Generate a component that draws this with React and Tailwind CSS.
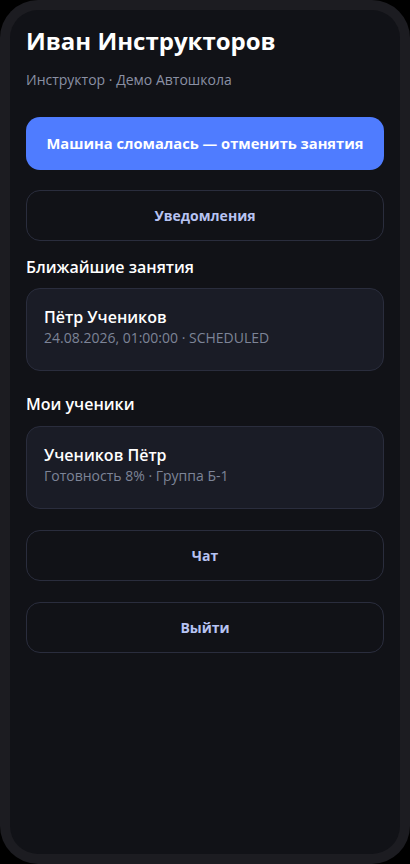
import React from "react";

const font = { fontFamily: '"Open Sans", "Noto Sans", sans-serif' };

function OutlineButton({ children }) {
  return (
    <button className="w-full h-[51px] rounded-[14px] border border-[#2a2d3d] bg-transparent text-[14px] font-bold text-[#b7c3f2]">
      {children}
    </button>
  );
}

function Card({ title, sub }) {
  return (
    <div className="rounded-[14px] border border-[#2a2d3d] bg-[#1a1c26] px-[17px] pt-[17px] h-[83px]">
      <div className="text-[16px] font-semibold text-white leading-[22px]">{title}</div>
      <div className="text-[14px] text-[#7d8497] leading-[20px]">{sub}</div>
    </div>
  );
}

export default function App() {
  return (
    <div className="w-[410px] h-[864px] bg-black" style={font}>
      <div className="w-full h-full rounded-[38px] bg-[#1c1c21] p-[10px]">
        <div className="w-full h-full rounded-[28px] bg-[#111217] px-[16px] pt-[15px]">
          <h1 className="text-[24px] font-bold text-white leading-[32px]">Иван Инструкторов</h1>
          <p className="mt-[13px] text-[14px] text-[#8a90a4] leading-[20px]">Инструктор · Демо Автошкола</p>

          <button className="mt-[27px] w-full h-[53px] rounded-[14px] bg-[#4f7cff] text-white text-[14.7px] font-bold">
            Машина сломалась — отменить занятия
          </button>

          <div className="mt-[20px]">
            <OutlineButton>Уведомления</OutlineButton>
          </div>

          <h2 className="mt-[14px] text-[16px] font-semibold text-white leading-[24px]">Ближайшие занятия</h2>
          <div className="mt-[9px]">
            <Card title="Пётр Учеников" sub="24.08.2026, 01:00:00 · SCHEDULED" />
          </div>

          <h2 className="mt-[21px] text-[16px] font-semibold text-white leading-[24px]">Мои ученики</h2>
          <div className="mt-[10px]">
            <Card title="Учеников Пётр" sub="Готовность 8% · Группа Б-1" />
          </div>

          <div className="mt-[21px]">
            <OutlineButton>Чат</OutlineButton>
          </div>
          <div className="mt-[21px]">
            <OutlineButton>Выйти</OutlineButton>
          </div>
        </div>
      </div>
    </div>
  );
}
